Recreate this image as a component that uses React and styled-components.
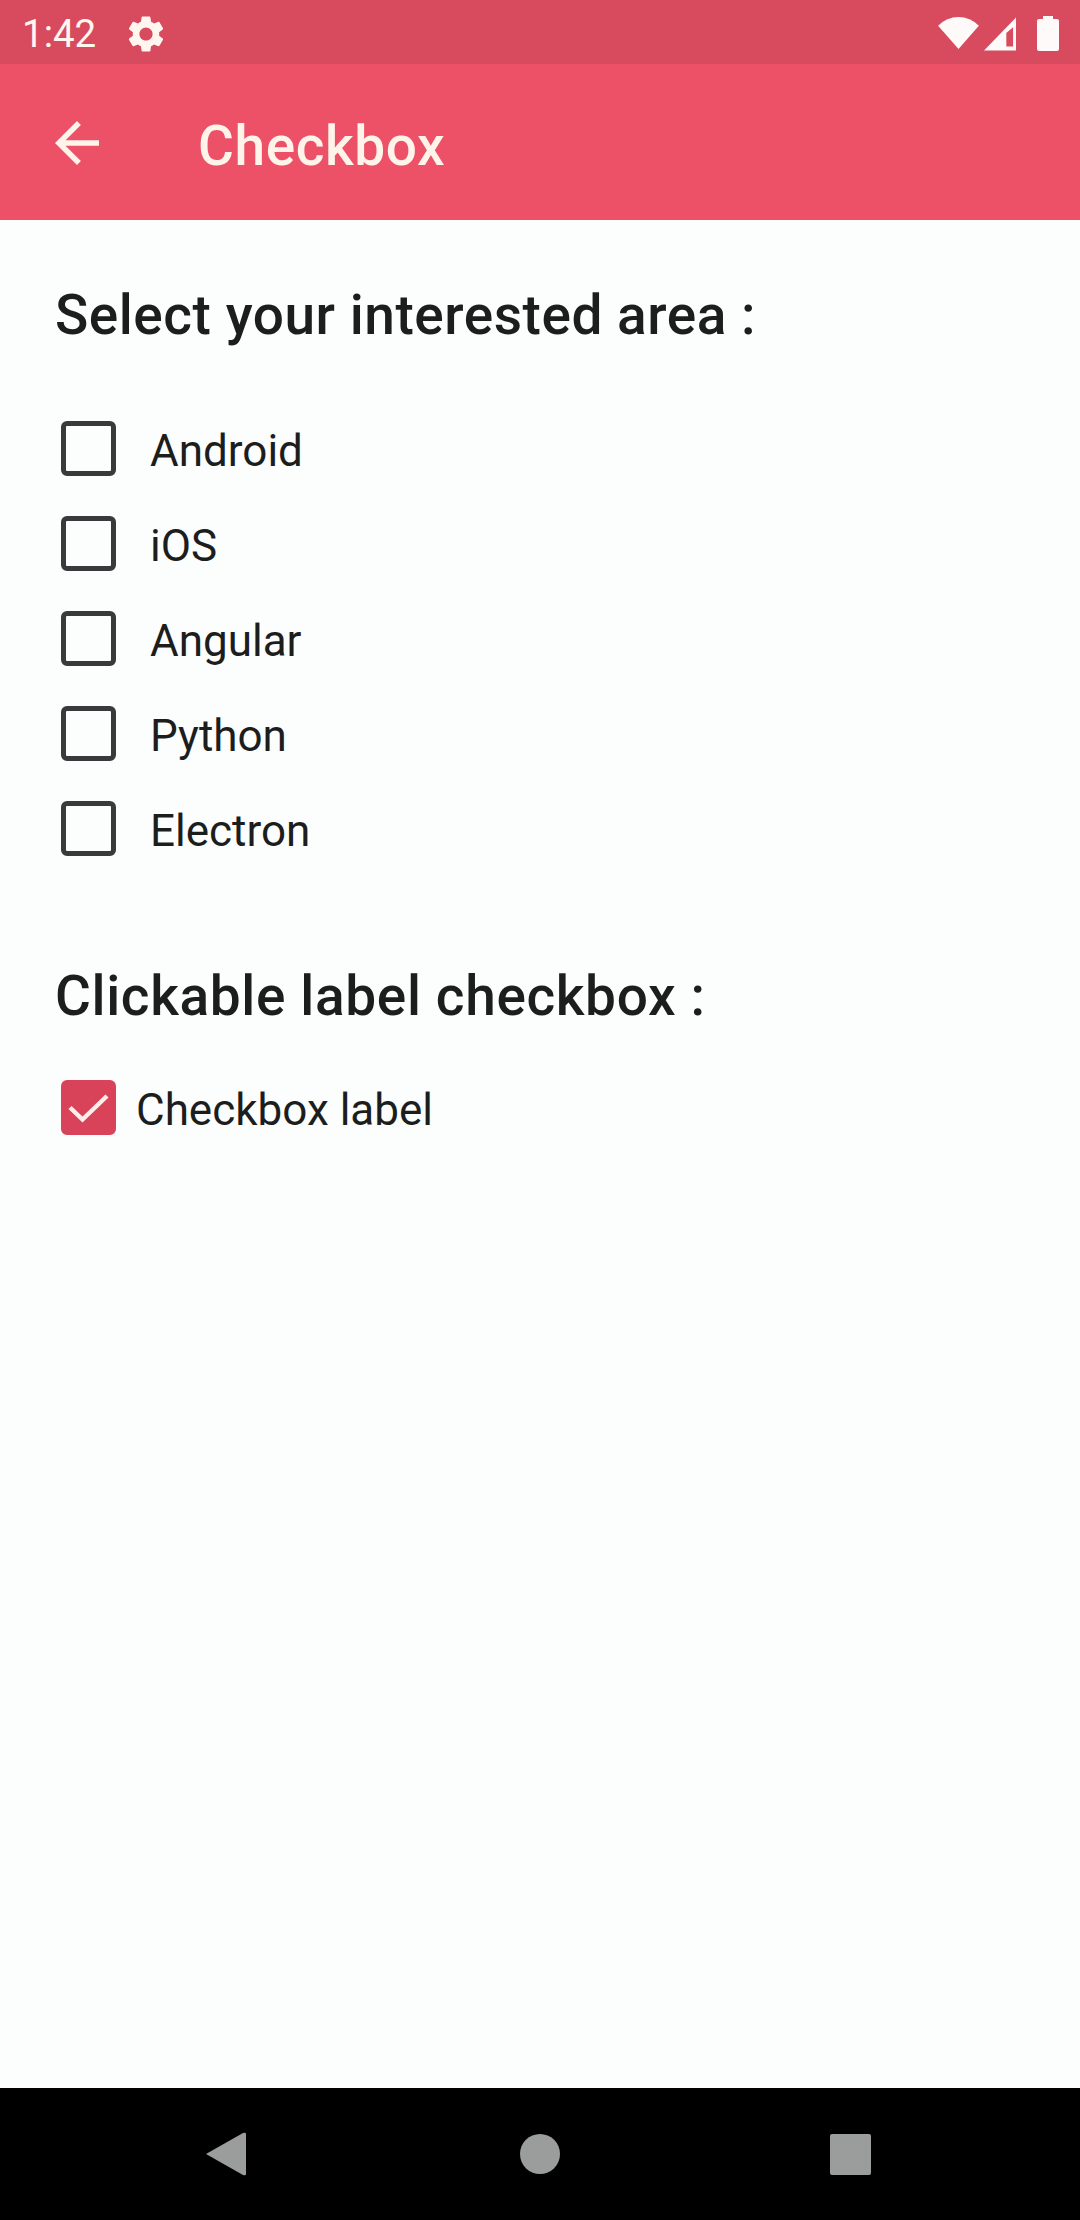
import React, { useState } from "react";
import styled, { createGlobalStyle } from "styled-components";

const GlobalStyle = createGlobalStyle`
  *, *::before, *::after { box-sizing: border-box; }
  body {
    margin: 0;
    background: #fcfdfd;
    font-family: Roboto, "Liberation Sans", sans-serif;
    color: #1c1e1e;
  }
`;

const Screen = styled.div`
  display: flex;
  flex-direction: column;
  width: 1080px;
  height: 2220px;
  overflow: hidden;
`;

const StatusBar = styled.div`
  display: flex;
  align-items: center;
  flex: none;
  height: 64px;
  padding: 3px 21px 0 22px;
  background: #d84a5d;
  color: #fff6f0;
`;

const Clock = styled.span`
  width: 107px;
  font-size: 38.5px;
  line-height: 46px;
`;

const StatusIcons = styled.div`
  display: flex;
  align-items: center;
  gap: 5px;
  margin-left: auto;
  color: #fffafa;
`;

const Icon = styled.svg`
  display: block;
  flex: none;
  width: ${(p) => p.$w}px;
  height: ${(p) => p.$h}px;
  margin-left: ${(p) => p.$gap || 0}px;
  fill: currentColor;
`;

const AppBar = styled.header`
  display: flex;
  align-items: center;
  flex: none;
  height: 156px;
  padding: 2px 44px 0;
  gap: 88px;
  background: #ed5167;
  color: #fff4ea;
`;

const BackButton = styled.button`
  display: flex;
  padding: 0;
  border: 0;
  background: none;
  color: inherit;
`;

const Title = styled.h1`
  margin: 0;
  padding-top: 6px;
  font-size: 55px;
  line-height: 66px;
  font-weight: 500;
  letter-spacing: 0.6px;
`;

const Content = styled.main`
  flex: 1;
  padding: 62px 55px 0;
`;

const Heading = styled.h2`
  margin: 0;
  font-size: 55px;
  line-height: 66px;
  font-weight: 500;
  letter-spacing: ${(p) => p.$spacing}px;
`;

const OptionList = styled.div`
  display: flex;
  flex-direction: column;
  padding-top: 53px;
  margin-bottom: 87px;
`;

const Option = styled.label`
  display: flex;
  align-items: center;
  height: 95px;
  padding-left: 6px;
  gap: ${(p) => p.$gap}px;
`;

const LabelText = styled.span`
  padding-top: 5px;
  font-size: 44px;
  line-height: 52px;
`;

const HiddenInput = styled.input`
  appearance: none;
  position: absolute;
  width: 0;
  height: 0;
  margin: 0;
`;

const Box = styled.span`
  display: flex;
  align-items: center;
  justify-content: center;
  flex: none;
  width: 55px;
  height: 55px;
  border-radius: 6px;
  border: 5px solid ${(p) => (p.$checked ? "#d9435a" : "#383a3c")};
  background: ${(p) => (p.$checked ? "#d9435a" : "transparent")};
`;

const CheckMark = styled.svg`
  flex: none;
  width: 45px;
  height: 45px;
  fill: none;
  stroke: #ffeee9;
  stroke-width: 4.5px;
`;

const Single = styled.div`
  padding-top: 31px;
`;

const NavBar = styled.nav`
  display: flex;
  align-items: center;
  justify-content: space-between;
  flex: none;
  height: 132px;
  padding: 0 209px 0 206px;
  background: #000;
  color: #9b9d9c;
`;

function Checkbox({ label, gap, initial = false }) {
  const [checked, setChecked] = useState(initial);
  return (
    <Option $gap={gap}>
      <HiddenInput type="checkbox" checked={checked} onChange={() => setChecked(!checked)} />
      <Box $checked={checked}>
        {checked && (
          <CheckMark viewBox="0 0 45 45">
            <path d="M4 22.5 L16.5 34.5 L41 11" />
          </CheckMark>
        )}
      </Box>
      <LabelText>{label}</LabelText>
    </Option>
  );
}

const areas = ["Android", "iOS", "Angular", "Python", "Electron"];

export default function App() {
  return (
    <Screen>
      <GlobalStyle />
      <StatusBar>
        <Clock>1:42</Clock>
        <Icon $w={44} $h={44} $gap={-5} viewBox="0 0 24 24">
          <path d="M19.14 12.94c.04-.3.06-.61.06-.94 0-.32-.02-.64-.07-.94l2.03-1.58c.18-.14.23-.41.12-.61l-1.92-3.32c-.12-.22-.37-.29-.59-.22l-2.39.96c-.5-.38-1.03-.7-1.62-.94l-.36-2.54c-.04-.24-.24-.41-.48-.41h-3.84c-.24 0-.43.17-.47.41l-.36 2.54c-.59.24-1.13.57-1.62.94l-2.39-.96c-.22-.08-.47 0-.59.22L2.74 8.87c-.12.21-.08.47.12.61l2.03 1.58c-.05.3-.09.63-.09.94s.02.64.07.94l-2.03 1.58c-.18.14-.23.41-.12.61l1.92 3.32c.12.22.37.29.59.22l2.39-.96c.5.38 1.03.7 1.62.94l.36 2.54c.05.24.24.41.48.41h3.84c.24 0 .44-.17.47-.41l.36-2.54c.59-.24 1.13-.56 1.62-.94l2.39.96c.22.08.47 0 .59-.22l1.92-3.32c.12-.22.07-.47-.12-.61l-2.01-1.58zM12 15.6c-1.98 0-3.6-1.62-3.6-3.6s1.62-3.6 3.6-3.6 3.6 1.62 3.6 3.6-1.62 3.6-3.6 3.6z" />
        </Icon>
        <StatusIcons>
          <Icon $w={41} $h={33} viewBox="0 0 42 34">
            <path d="M0 9 Q9 0 21 0 T42 9 L21 33 Z" />
          </Icon>
          <Icon $w={32} $h={34} viewBox="0 0 33 34">
            <path fillRule="evenodd" d="M33 0 V34 H0 Z M30 10 L23 16 V30 H30 Z" />
          </Icon>
          <Icon $w={22} $h={35} $gap={16} viewBox="0 0 22 35">
            <path d="M6 0 H16 V3 H20 Q22 3 22 5 V33 Q22 35 20 35 H2 Q0 35 0 33 V5 Q0 3 2 3 H6 Z" />
          </Icon>
        </StatusIcons>
      </StatusBar>
      <AppBar>
        <BackButton aria-label="Back">
          <Icon $w={66} $h={66} viewBox="0 0 24 24">
            <path d="M20 11H7.83l5.59-5.59L12 4l-8 8 8 8 1.41-1.41L7.83 13H20v-2z" />
          </Icon>
        </BackButton>
        <Title>Checkbox</Title>
      </AppBar>
      <Content>
        <Heading $spacing={0.53}>Select your interested area :</Heading>
        <OptionList>
          {areas.map((area) => (
            <Checkbox key={area} label={area} gap={34} />
          ))}
        </OptionList>
        <Heading $spacing={0.63}>Clickable label checkbox :</Heading>
        <Single>
          <Checkbox label="Checkbox label" gap={20} initial />
        </Single>
      </Content>
      <NavBar>
        <Icon $w={40} $h={44} viewBox="0 0 40 44">
          <path d="M0 22 L37 1 Q40 0 40 2 V42 Q40 44 37 43 Z" />
        </Icon>
        <Icon $w={40} $h={40} $gap={3} viewBox="0 0 40 40">
          <circle cx="20" cy="20" r="20" />
        </Icon>
        <Icon $w={41} $h={41} viewBox="0 0 41 41">
          <rect width="41" height="41" rx="2" />
        </Icon>
      </NavBar>
    </Screen>
  );
}
